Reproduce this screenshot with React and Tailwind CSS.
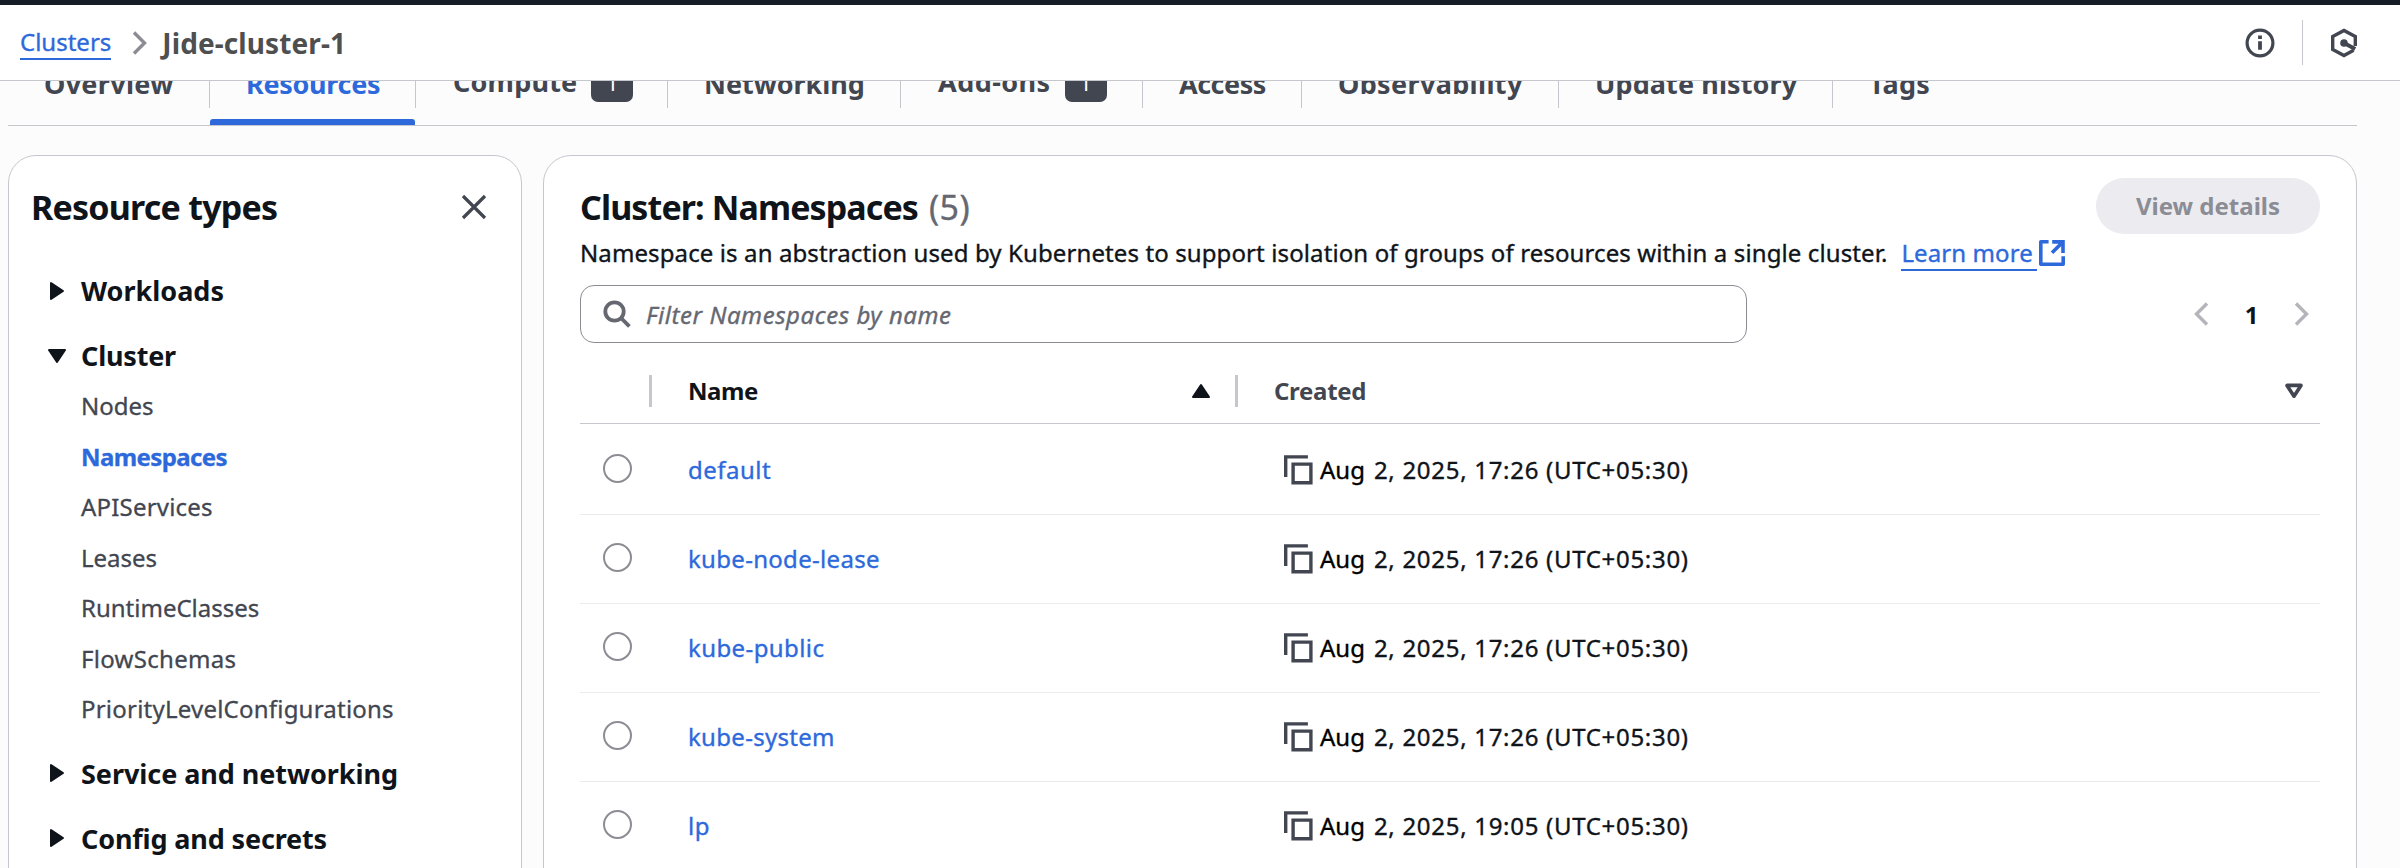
import React from "react";

const TABS = [
  { label: "Overview", box: "w-[202px]", text: "tracking-[0.3px]" },
  { label: "Resources", box: "w-[206px]", text: "tracking-[-0.3px]", active: true },
  { label: "Compute", box: "w-[252px]", text: "tracking-[0.2px]", badge: "1" },
  { label: "Networking", box: "w-[233px]", text: "tracking-[-0.05px]" },
  { label: "Add-ons", box: "w-[242px]", text: "tracking-[0.45px]", badge: "1" },
  { label: "Access", box: "w-[159px]", text: "tracking-[-0.5px]" },
  { label: "Observability", box: "w-[257px]", text: "tracking-[0.35px]" },
  { label: "Update history", box: "w-[274px]", text: "tracking-[0.1px]" },
  { label: "Tags", box: "w-[140px]", text: "tracking-[0.2px]", last: true },
];

const CLUSTER_ITEMS = [
  { label: "Nodes", cls: "text-[#424650]" },
  { label: "Namespaces", cls: "font-bold text-[#2d69db] tracking-[-0.6px]" },
  { label: "APIServices", cls: "text-[#424650] tracking-[0.2px]" },
  { label: "Leases", cls: "text-[#424650]" },
  { label: "RuntimeClasses", cls: "text-[#424650]" },
  { label: "FlowSchemas", cls: "text-[#424650] tracking-[0.3px]" },
  { label: "PriorityLevelConfigurations", cls: "text-[#424650] tracking-[0.22px]" },
];

const ROWS = [
  { name: "default", rest: "2, 2025, 17:26 (UTC+05:30)", cls: "tracking-[0.5px]", h: "h-[91px] pt-px" },
  { name: "kube-node-lease", rest: "2, 2025, 17:26 (UTC+05:30)", cls: "tracking-[0.3px]", h: "h-[89px]" },
  { name: "kube-public", rest: "2, 2025, 17:26 (UTC+05:30)", cls: "tracking-[0.4px]", h: "h-[89px]" },
  { name: "kube-system", rest: "2, 2025, 17:26 (UTC+05:30)", cls: "tracking-[0.3px]", h: "h-[89px]" },
  { name: "lp", rest: "2, 2025, 19:05 (UTC+05:30)", cls: "tracking-[0.5px]", h: "h-[88px]" },
];

function Chevron({ flip, className }) {
  return (
    <svg width="16" height="26" viewBox="0 0 16 26" className={className} fill="none" stroke="currentColor" strokeWidth="3.4">
      <path d={flip ? "M14 2.5 3.5 13 14 23.5" : "M2 2.5 12.5 13 2 23.5"} />
    </svg>
  );
}

function Caret({ open }) {
  return (
    <svg width="20" height="20" viewBox="0 0 20 20" className="shrink-0 text-[#0f141a]" fill="currentColor" stroke="currentColor" strokeWidth="2" strokeLinejoin="round">
      <path d={open ? "M2 4h16l-8 12z" : "M4 2v16l12-8z"} />
    </svg>
  );
}

function Group({ label, open, text }) {
  return (
    <div className="flex h-[65px] items-center gap-[14px] pl-[38px] text-[27px] font-bold text-[#0f141a]">
      <Caret open={open} />
      <span className={`pt-[2px] ${text}`}>{label}</span>
    </div>
  );
}

function CopyIcon() {
  return (
    <svg width="29" height="30" viewBox="0 0 29 30" className="shrink-0 text-[#424650]" fill="none" stroke="currentColor" strokeWidth="3.4">
      <path d="M1.7 22V1.9h22.2" />
      <path d="M9.1 9.1h17.8v18.6H9.1z" />
    </svg>
  );
}

function Header() {
  return (
    <header className="flex h-[81px] items-center justify-between border-b border-[#c6c6cd] border-t-[5px] border-t-[#161d26] bg-white pl-5">
      <nav className="flex items-center">
        <a className="-mt-px h-[35px] border-b-2 border-[#2d69db] text-[24px] leading-[34px] text-[#2d69db] [-webkit-text-stroke:0.35px]">Clusters</a>
        <Chevron className="ml-[21px] text-[#8c8c94]" />
        <span className="ml-[14px] text-[28px] leading-[38px] font-bold tracking-[0.1px] text-[#4f4f4f]">Jide-cluster-1</span>
      </nav>
      <div className="flex items-center">
        <svg width="30" height="30" viewBox="0 0 30 30" fill="none" className="text-[#424650]">
          <circle cx="15" cy="15" r="12.9" stroke="currentColor" strokeWidth="3.2" />
          <path d="M15 7.6v3.4M15 13.2v8.6" stroke="currentColor" strokeWidth="3.8" />
        </svg>
        <div className="ml-[27px] h-[45px] w-px bg-[#c6c6cd]" />
        <svg width="30" height="30" viewBox="0 0 30 30" fill="none" className="mr-[41px] ml-[26px] text-[#424650]" stroke="currentColor">
          <path d="M26.3 18V8.6L15 2.4 3.7 8.6v12.8L15 27.6l9.6-5.3" strokeWidth="3.4" />
          <path d="M15 15l11.2 6" strokeWidth="4" />
          <circle cx="15" cy="15" r="3.8" fill="currentColor" stroke="none" />
        </svg>
      </div>
    </header>
  );
}

function Tabs() {
  return (
    <div className="mr-[43px] ml-2 flex h-[45px] items-end overflow-hidden border-b border-[#c6c6cd]">
      {TABS.map((t) => (
        <div key={t.label} className={`flex h-[74px] shrink-0 flex-col justify-between ${t.box}`}>
          <div className={`flex h-[57px] items-center border-[#c6c6cd] pl-[36px] ${t.last ? "" : "border-r"}`}>
            <div className={`flex items-center gap-[14px] text-[27px] font-bold whitespace-nowrap ${t.active ? "text-[#2d69db]" : "text-[#424650]"} ${t.badge ? "pl-px" : "pt-[10px]"}`}>
              <span className={`${t.text} ${t.badge ? "pt-[6px]" : ""}`}>{t.label}</span>
              {t.badge && (
                <span className="mt-[7px] flex h-[38px] w-[42px] items-center justify-center rounded-[7px] bg-[#424650] pb-[2px] text-[22px] font-normal text-white">
                  {t.badge}
                </span>
              )}
            </div>
          </div>
          {t.active && <div className="h-[6px] w-[205px] rounded-t-[3px] bg-[#2d69db]" />}
        </div>
      ))}
    </div>
  );
}

function Sidebar() {
  return (
    <aside className="h-[760px] w-[514px] shrink-0 rounded-t-[28px] border border-[#c6c6cd] bg-white">
      <div className="flex h-[102px] items-center justify-between pr-[34px] pl-[22px]">
        <h2 className="text-[34px] font-bold tracking-[-0.78px] text-[#0f141a]">Resource types</h2>
        <svg width="26" height="26" viewBox="0 0 26 26" className="-mt-px text-[#424650]" stroke="currentColor" strokeWidth="3.2">
          <path d="M2 2l22 22M24 2L2 24" />
        </svg>
      </div>
      <Group label="Workloads" text="tracking-normal" />
      <Group label="Cluster" text="tracking-[-0.2px]" open />
      <ul className="-mt-[7px] pl-[72px] text-[24px]">
        {CLUSTER_ITEMS.map((i) => (
          <li key={i.label} className="flex h-[50.5px] items-center">
            <a className={`${i.cls} [-webkit-text-stroke:0.3px]`}>{i.label}</a>
          </li>
        ))}
      </ul>
      <div className="mt-[6px]">
        <Group label="Service and networking" text="tracking-[-0.06px]" />
        <Group label="Config and secrets" text="tracking-[-0.15px]" />
      </div>
    </aside>
  );
}

function Main() {
  return (
    <main className="h-[760px] w-[1814px] shrink-0 rounded-t-[28px] border border-[#c6c6cd] bg-white pr-9 pl-9">
      <div className="flex items-start justify-between pt-[22px]">
        <div>
          <h2 className="h-[54px] text-[34px] leading-[58px] font-bold tracking-[-0.9px] text-[#0f141a]">
            Cluster: Namespaces <span className="ml-[3px] font-normal tracking-[0.5px] text-[#656871] [-webkit-text-stroke:0.3px]">(5)</span>
          </h2>
          <div className="flex h-[45px] items-start pt-[4px] text-[24px] leading-[34px] text-[#0f141a] [-webkit-text-stroke:0.35px]">
            <p className="tracking-[0.11px]">
              Namespace is an abstraction used by Kubernetes to support isolation of groups of resources within a single cluster.
            </p>
            <a className="ml-[14px] h-[35px] w-[136px] border-b-2 border-[#2d69db] tracking-[0.1px] text-[#2d69db]">Learn more</a>
            <svg width="26" height="26" viewBox="0 0 26 26" fill="none" className="mt-[4px] ml-[2px] text-[#2d69db]" stroke="currentColor" strokeWidth="3.6">
              <path d="M9.6 1.8H1.8v22.4h22.4v-8" strokeLinejoin="round" />
              <path d="M13.2 1.9H24v11.2M24 1.9L13 12.8" />
            </svg>
          </div>
        </div>
        <button className="h-[56px] w-[224px] rounded-full bg-[#ebebf0] text-[24px] font-bold text-[#8c8c94]">View details</button>
      </div>
      <div className="mt-[8px] flex h-[58px] items-center justify-between">
        <div className="flex h-[58px] w-[1167px] items-center rounded-[14px] border border-[#8c8c94] pl-[22px] text-[24px] tracking-[0.55px] text-[#656871] italic">
          <svg width="28" height="28" viewBox="0 0 28 28" fill="none" className="mr-[15px]" stroke="currentColor" strokeWidth="3.8">
            <circle cx="11.5" cy="11.5" r="9.2" />
            <path d="M18 18l8.4 8.4" />
          </svg>
          <span className="pt-px [-webkit-text-stroke:0.35px]">Filter Namespaces by name</span>
        </div>
        <div className="flex items-center pr-[10px]">
          <Chevron flip className="text-[#b4b4bb]" />
          <span className="w-[85px] pt-px text-center text-[24px] font-bold text-[#0f141a]">1</span>
          <Chevron className="text-[#b4b4bb]" />
        </div>
      </div>
      <div className="flex h-[81px] items-center border-b border-[#c6c6cd] pt-[15px] text-[24px] font-bold">
        <div className="ml-[69px] h-[32px] w-[3px] bg-[#c6c6cd]" />
        <span className="ml-[36px] w-[503px] tracking-[-0.4px] text-[#0f141a]">Name</span>
        <svg width="20" height="18" viewBox="0 0 20 18" className="text-[#0f141a]" fill="currentColor" stroke="currentColor" strokeWidth="2" strokeLinejoin="round">
          <path d="M10 3l8 12H2z" />
        </svg>
        <div className="ml-[24px] h-[32px] w-[3px] bg-[#c6c6cd]" />
        <span className="ml-[36px] tracking-[-0.3px] text-[#424650]">Created</span>
        <svg width="20" height="18" viewBox="0 0 20 18" className="mr-[16px] ml-auto text-[#424650]" fill="none" stroke="currentColor" strokeWidth="3.6" strokeLinejoin="round">
          <path d="M3 3.4h14L10 14.2z" />
        </svg>
      </div>
      {ROWS.map((r) => (
        <div key={r.name} className={`flex items-center border-b border-[#ebebf0] text-[24px] [-webkit-text-stroke:0.35px] ${r.h}`}>
          <span className="mb-[3px] ml-[23px] size-[29px] shrink-0 rounded-full border-2 border-[#8c8c94]" />
          <a className={`ml-[56px] w-[596px] text-[#2d69db] ${r.cls}`}>{r.name}</a>
          <CopyIcon />
          <span className="ml-[7px] text-black">Aug</span>
          <span className="ml-[9px] tracking-[0.7px] text-[#0f141a]">{r.rest}</span>
        </div>
      ))}
    </main>
  );
}

export default function App() {
  return (
    <div className="h-[868px] w-[2400px] overflow-hidden bg-[#fcfcfd] font-['Noto_Sans',sans-serif]">
      <Header />
      <Tabs />
      <div className="mt-[29px] flex gap-[21px] pl-2">
        <Sidebar />
        <Main />
      </div>
    </div>
  );
}
